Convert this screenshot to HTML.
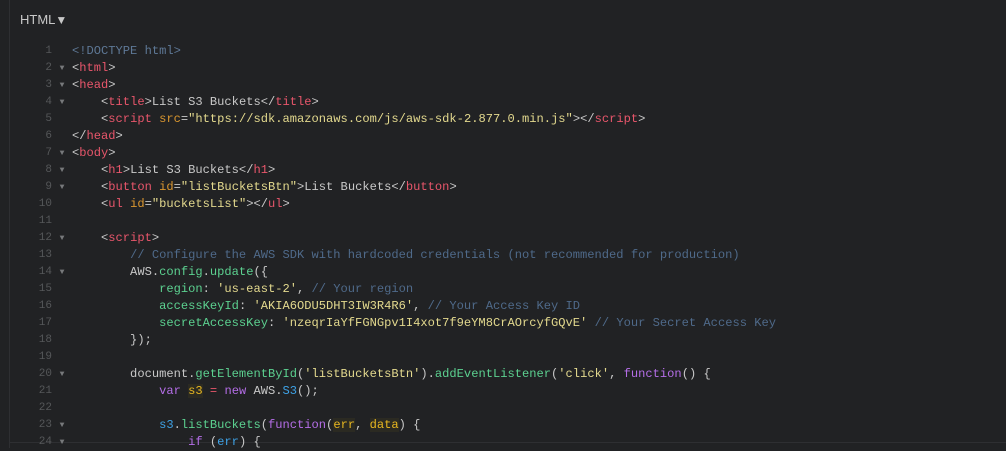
<!DOCTYPE html>
<html><head><meta charset="utf-8"><style>
body{margin:0;width:1006px;height:448px;background:#212224;overflow:hidden;position:relative;font-family:"Liberation Mono",monospace}
.vl{position:absolute;left:9px;top:0;width:1px;height:448px;background:#2e2f32}
.hl{position:absolute;left:9px;top:442px;width:997px;height:1px;background:#2e2f32}
.hdr{position:absolute;left:20px;top:12px;font:13px "Liberation Sans",sans-serif;color:#c8c8c8}
.code{position:absolute;left:0;top:43px;font-size:12.1px;color:#c8c8c8}
.code div{height:17px;line-height:17px;white-space:pre;overflow:visible}
.ln{display:inline-block;width:52px;text-align:right;color:#555759;font-size:11px;line-height:17px;vertical-align:top}
.f{display:inline-block;width:20px;text-align:center;color:#77797b;font-size:8px;line-height:17px;vertical-align:top}
.t{color:#e8566b}.d{color:#5e7896}.a{color:#d9962f}.s{color:#e3d98e}.c{color:#4f6a8a}.p{color:#5cd190}.b{color:#3ea2e6}.k{color:#b56ee8}.y{color:#e8b720;background:#2b2a22}
</style></head><body>
<div class="vl"></div><div class="hl"></div>
<div class="hdr">HTML<span style="font-size:12px">▼</span></div>
<div class="code">
<div><span class="ln">1</span><span class="f"> </span><span class="d">&lt;!DOCTYPE html&gt;</span></div>
<div><span class="ln">2</span><span class="f">▼</span>&lt;<span class="t">html</span>&gt;</div>
<div><span class="ln">3</span><span class="f">▼</span>&lt;<span class="t">head</span>&gt;</div>
<div><span class="ln">4</span><span class="f">▼</span>    &lt;<span class="t">title</span>&gt;List S3 Buckets&lt;/<span class="t">title</span>&gt;</div>
<div><span class="ln">5</span><span class="f"> </span>    &lt;<span class="t">script</span> <span class="a">src</span>=<span class="s">"https://sdk.amazonaws.com/js/aws-sdk-2.877.0.min.js"</span>&gt;&lt;/<span class="t">script</span>&gt;</div>
<div><span class="ln">6</span><span class="f"> </span>&lt;/<span class="t">head</span>&gt;</div>
<div><span class="ln">7</span><span class="f">▼</span>&lt;<span class="t">body</span>&gt;</div>
<div><span class="ln">8</span><span class="f">▼</span>    &lt;<span class="t">h1</span>&gt;List S3 Buckets&lt;/<span class="t">h1</span>&gt;</div>
<div><span class="ln">9</span><span class="f">▼</span>    &lt;<span class="t">button</span> <span class="a">id</span>=<span class="s">"listBucketsBtn"</span>&gt;List Buckets&lt;/<span class="t">button</span>&gt;</div>
<div><span class="ln">10</span><span class="f"> </span>    &lt;<span class="t">ul</span> <span class="a">id</span>=<span class="s">"bucketsList"</span>&gt;&lt;/<span class="t">ul</span>&gt;</div>
<div><span class="ln">11</span><span class="f"> </span></div>
<div><span class="ln">12</span><span class="f">▼</span>    &lt;<span class="t">script</span>&gt;</div>
<div><span class="ln">13</span><span class="f"> </span>        <span class="c">// Configure the AWS SDK with hardcoded credentials (not recommended for production)</span></div>
<div><span class="ln">14</span><span class="f">▼</span>        AWS.<span class="p">config</span>.<span class="p">update</span>({</div>
<div><span class="ln">15</span><span class="f"> </span>            <span class="p">region</span>: <span class="s">'us-east-2'</span>, <span class="c">// Your region</span></div>
<div><span class="ln">16</span><span class="f"> </span>            <span class="p">accessKeyId</span>: <span class="s">'AKIA6ODU5DHT3IW3R4R6'</span>, <span class="c">// Your Access Key ID</span></div>
<div><span class="ln">17</span><span class="f"> </span>            <span class="p">secretAccessKey</span>: <span class="s">'nzeqrIaYfFGNGpv1I4xot7f9eYM8CrAOrcyfGQvE'</span> <span class="c">// Your Secret Access Key</span></div>
<div><span class="ln">18</span><span class="f"> </span>        });</div>
<div><span class="ln">19</span><span class="f"> </span></div>
<div><span class="ln">20</span><span class="f">▼</span>        document.<span class="p">getElementById</span>(<span class="s">'listBucketsBtn'</span>).<span class="p">addEventListener</span>(<span class="s">'click'</span>, <span class="k">function</span>() {</div>
<div><span class="ln">21</span><span class="f"> </span>            <span class="k">var</span> <span class="y">s3</span> <span class="t">=</span> <span class="k">new</span> AWS.<span class="b">S3</span>();</div>
<div><span class="ln">22</span><span class="f"> </span></div>
<div><span class="ln">23</span><span class="f">▼</span>            <span class="b">s3</span>.<span class="p">listBuckets</span>(<span class="k">function</span>(<span class="y">err</span>, <span class="y">data</span>) {</div>
<div><span class="ln">24</span><span class="f">▼</span>                <span class="k">if</span> (<span class="b">err</span>) {</div>
</div>
</body></html>
